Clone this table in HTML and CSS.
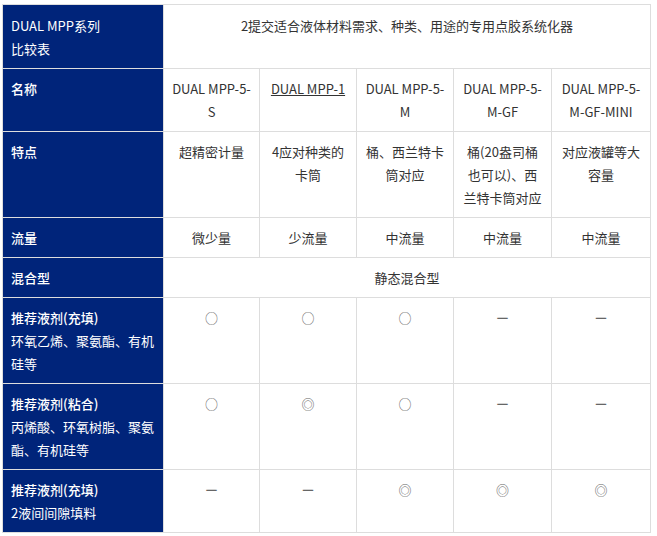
FILE: index.html
```html
<!DOCTYPE html>
<html lang="zh">
<head>
<meta charset="utf-8">
<title>DUAL MPP系列 比较表</title>
<link rel="stylesheet" href="styles.css">
</head>
<body>
<table class="cmp">
  <colgroup>
    <col class="c-head">
    <col class="c-a">
    <col class="c-b">
    <col class="c-c">
    <col class="c-d">
    <col class="c-e">
  </colgroup>
  <tbody>
    <tr class="first">
      <th class="plain">DUAL MPP系列<br>比较表</th>
      <td colspan="5">2提交适合液体材料需求、种类、用途的专用点胶系统化器</td>
    </tr>
    <tr>
      <th>名称</th>
      <td>DUAL MPP-5-S</td>
      <td><a class="link" href="#">DUAL MPP-1</a></td>
      <td>DUAL MPP-5-M</td>
      <td>DUAL MPP-5-M-GF</td>
      <td>DUAL MPP-5-M-GF-MINI</td>
    </tr>
    <tr>
      <th>特点</th>
      <td>超精密计量</td>
      <td>4应对种类的卡筒</td>
      <td>桶、西兰特卡筒对应</td>
      <td>桶(20盎司桶也可以)、西兰特卡筒对应</td>
      <td>对应液罐等大容量</td>
    </tr>
    <tr>
      <th>流量</th>
      <td>微少量</td>
      <td>少流量</td>
      <td>中流量</td>
      <td>中流量</td>
      <td>中流量</td>
    </tr>
    <tr>
      <th>混合型</th>
      <td colspan="5">静态混合型</td>
    </tr>
    <tr>
      <th>推荐液剂(充填)<br><span class="sub">环氧乙烯、聚氨酯、有机硅等</span></th>
      <td class="sym">○</td>
      <td class="sym">○</td>
      <td class="sym">○</td>
      <td class="sym">ー</td>
      <td class="sym">ー</td>
    </tr>
    <tr>
      <th>推荐液剂(粘合)<br><span class="sub">丙烯酸、环氧树脂、聚氨酯、有机硅等</span></th>
      <td class="sym">○</td>
      <td class="sym">◎</td>
      <td class="sym">○</td>
      <td class="sym">ー</td>
      <td class="sym">ー</td>
    </tr>
    <tr>
      <th>推荐液剂(充填)<br><span class="sub">2液间间隙填料</span></th>
      <td class="sym">ー</td>
      <td class="sym">ー</td>
      <td class="sym">◎</td>
      <td class="sym">◎</td>
      <td class="sym">◎</td>
    </tr>
  </tbody>
</table>
</body>
</html>
```

FILE: styles.css
```css
html, body {
  margin: 0;
  padding: 0;
  background: #fff;
}

body {
  padding: 4px 0 0 2px;
  font-family: "Noto Sans CJK SC", "Noto Sans", sans-serif;
  font-size: 13px;
  line-height: 23px;
  color: #333;
}

.cmp {
  border-collapse: collapse;
  table-layout: fixed;
  width: 648px;
  border: 1px solid #ddd;
}

.c-head { width: 161px; }
.c-a { width: 96px; }
.c-b { width: 97px; }
.c-c { width: 97px; }
.c-d { width: 98px; }
.c-e { width: 99px; }

.cmp th,
.cmp td {
  border: 1px solid #ddd;
  padding: 8px;
  vertical-align: top;
}

.cmp .first th,
.cmp .first td {
  padding-top: 9px;
}

.cmp th {
  background: #00247a;
  color: #fff;
  text-align: left;
  font-weight: 500;
}

.cmp th.plain {
  font-weight: 400;
}

.cmp th .sub {
  font-weight: 400;
}

.cmp td {
  text-align: center;
}

.link {
  color: #333;
  text-decoration: underline;
}

.sym {
  color: #666;
}
```
